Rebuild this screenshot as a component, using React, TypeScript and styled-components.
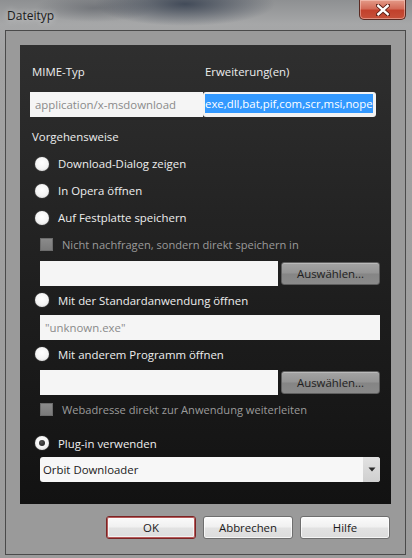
import React from "react";
import styled, { createGlobalStyle } from "styled-components";

const GlobalStyle = createGlobalStyle`
  html, body {
    margin: 0;
    padding: 0;
    background: #9c9c9c;
  }
  * {
    box-sizing: border-box;
  }
  body {
    font-family: "Open Sans", "Noto Sans", sans-serif;
    font-size: 11.4px;
  }
`;

const Window = styled.div`
  width: 412px;
  height: 558px;
  display: flex;
  flex-direction: column;
  background:
    radial-gradient(ellipse 90px 22px at 185px 4px, rgba(52, 62, 78, 0.85), rgba(52, 62, 78, 0) 100%),
    radial-gradient(ellipse 60px 14px at 95px 8px, rgba(80, 84, 92, 0.5), rgba(80, 84, 92, 0) 100%),
    linear-gradient(180deg, #8e9092 0px, #a6a7a8 24px, #a2a2a2 60px, #9b9b9b 100%);
  overflow: hidden;
`;

const TitleBar = styled.div`
  height: 30px;
  display: flex;
  align-items: flex-start;
  justify-content: space-between;
  padding-left: 7px;
  padding-right: 6px;
`;

const Title = styled.span`
  margin-top: 7px;
  font-size: 12px;
  color: #1b1b1b;
  text-shadow: 0 0 6px rgba(255, 255, 255, 0.7);
`;

const CloseButton = styled.div`
  width: 47px;
  height: 20px;
  border: 1px solid #5a2a22;
  border-top: none;
  border-radius: 0 0 5px 5px;
  background: linear-gradient(180deg, #e49a88 0%, #d36b58 45%, #c2412c 55%, #c65039 100%);
  box-shadow: inset 0 0 0 1px rgba(255, 220, 210, 0.45);
  display: flex;
  align-items: center;
  justify-content: center;
`;

const Client = styled.div`
  flex: 1;
  margin: 0 6px 3px 5px;
  border: 1px solid #4a4a4a;
  background: #9a9a9a;
  padding: 14px 14px 0 14px;
  display: flex;
  flex-direction: column;
`;

const Panel = styled.div`
  height: 459px;
  background: linear-gradient(180deg, #2f2f2f 0%, #1e1e1e 55%, #121212 100%);
  padding: 17px 11px 0 10px;
  display: flex;
  flex-direction: column;
  color: #ececec;
`;

const HeaderGrid = styled.div`
  display: grid;
  grid-template-columns: 173px 173px;
  grid-template-rows: 20px 25px;
  row-gap: 10px;
`;

const Label = styled.div<{ $indent?: number }>`
  height: 20px;
  line-height: 20px;
  padding-left: ${(p) => p.$indent ?? 2}px;
  color: #ededed;
  white-space: nowrap;
`;

const TextBox = styled.div<{ $width?: number; $muted?: boolean }>`
  height: 25px;
  width: ${(p) => (p.$width ? `${p.$width}px` : "auto")};
  background: #f5f5f5;
  color: ${(p) => (p.$muted ? "#8a8a8a" : "#222")};
  line-height: 25px;
  padding-left: 5px;
  white-space: nowrap;
  overflow: hidden;
`;

const SelectedBox = styled.div`
  height: 25px;
  width: 173px;
  background: #f3f3f3;
  border-radius: 3px;
  padding: 2px 3px 0 2px;
`;

const Selection = styled.span`
  display: inline-block;
  height: 19px;
  line-height: 19px;
  background: #3399ff;
  color: #fff;
  white-space: nowrap;
`;

const Section = styled.div`
  margin-top: 10px;
`;

const Row = styled.div<{ $height: number; $indent: number; $gap?: number }>`
  height: ${(p) => p.$height}px;
  display: flex;
  align-items: center;
  padding-left: ${(p) => p.$indent}px;
  margin-top: ${(p) => p.$gap ?? 0}px;
  gap: 8px;
`;

const Radio = styled.span<{ $checked?: boolean }>`
  width: 14px;
  height: 14px;
  border-radius: 50%;
  background: radial-gradient(circle at 50% 40%, #ffffff 0%, #f4f4f4 55%, #cfcfcf 100%);
  box-shadow: 0 0 1px rgba(255, 255, 255, 0.6);
  display: flex;
  align-items: center;
  justify-content: center;
  flex-shrink: 0;

  &::after {
    content: "";
    display: ${(p) => (p.$checked ? "block" : "none")};
    width: 6px;
    height: 6px;
    border-radius: 50%;
    background: radial-gradient(circle at 40% 35%, #555, #1a1a1a);
  }
`;

const Check = styled.span`
  width: 13px;
  height: 13px;
  background: linear-gradient(180deg, #8a8a8a, #7a7a7a);
  border: 1px solid #6c6c6c;
  flex-shrink: 0;
`;

const OptionText = styled.span<{ $disabled?: boolean }>`
  color: ${(p) => (p.$disabled ? "#9b9b9b" : "#eeeeee")};
  font-size: ${(p) => (p.$disabled ? "11.1px" : "11.4px")};
  white-space: nowrap;
  padding-left: 1px;
`;

const FieldRow = styled.div<{ $gap?: number }>`
  display: flex;
  align-items: center;
  gap: 3px;
  padding-left: 10px;
  margin-top: ${(p) => p.$gap ?? 0}px;
  height: 25px;
`;

const FieldFull = styled(TextBox)`
  flex: 1;
`;

const BrowseButton = styled.div`
  width: 99px;
  height: 23px;
  border-radius: 3px;
  background: linear-gradient(180deg, #a4a4a4 0%, #949494 48%, #858585 52%, #8a8a8a 100%);
  box-shadow: inset 0 1px 0 rgba(255, 255, 255, 0.25);
  border: 1px solid #5e5e5e;
  color: #1e1e1e;
  display: flex;
  align-items: center;
  justify-content: center;
`;

const Select = styled.div`
  height: 25px;
  margin-left: 10px;
  background: #f7f7f7;
  border-radius: 3px;
  display: flex;
  align-items: center;
  color: #1a1a1a;
  overflow: hidden;
`;

const SelectValue = styled.span`
  flex: 1;
  padding-left: 3px;
`;

const SelectArrow = styled.span`
  width: 17px;
  height: 100%;
  background: linear-gradient(180deg, #e2e2e2, #cfcfcf);
  display: flex;
  align-items: center;
  justify-content: center;
`;

const ButtonBar = styled.div`
  display: flex;
  justify-content: flex-end;
  gap: 7px;
  margin-top: 12px;
  padding-right: 1px;
`;

const DialogButton = styled.div<{ $default?: boolean }>`
  width: 90px;
  height: 23px;
  border-radius: 3px;
  border: 1px solid ${(p) => (p.$default ? "#7a2424" : "#6e6e6e")};
  box-shadow: ${(p) =>
    p.$default
      ? "inset 0 0 0 1px #b65a5a, inset 0 0 0 2px rgba(255,255,255,0.6)"
      : "inset 0 0 0 1px rgba(255,255,255,0.7)"};
  background: linear-gradient(180deg, #fbfbfb 0%, #f0f0f0 48%, #e2e2e2 52%, #dcdcdc 100%);
  color: #1a1a1a;
  display: flex;
  align-items: center;
  justify-content: center;
`;

const CloseIcon = () => (
  <svg width="14" height="12" viewBox="0 0 14 12">
    <path
      d="M2 1.5 L12 10.5 M12 1.5 L2 10.5"
      stroke="#5a1d14"
      strokeWidth="4.2"
      strokeLinecap="square"
    />
    <path
      d="M2.3 1.8 L11.7 10.2 M11.7 1.8 L2.3 10.2"
      stroke="#ffffff"
      strokeWidth="2.4"
      strokeLinecap="square"
    />
  </svg>
);

const ArrowIcon = () => (
  <svg width="8" height="5" viewBox="0 0 8 5">
    <path d="M0.5 0.5 L7.5 0.5 L4 4.5 Z" fill="#2a2a2a" />
  </svg>
);

type OptionProps = {
  text: string;
  height: number;
  gap?: number;
  checked?: boolean;
};

const RadioOption = ({ text, height, gap, checked }: OptionProps) => (
  <Row $height={height} $indent={5} $gap={gap}>
    <Radio $checked={checked} />
    <OptionText>{text}</OptionText>
  </Row>
);

const CheckOption = ({ text, height, gap }: OptionProps) => (
  <Row $height={height} $indent={10} $gap={gap}>
    <Check />
    <OptionText $disabled>{text}</OptionText>
  </Row>
);

const App = () => {
  return (
    <>
      <GlobalStyle />
      <Window>
        <TitleBar>
          <Title>Dateityp</Title>
          <CloseButton>
            <CloseIcon />
          </CloseButton>
        </TitleBar>
        <Client>
          <Panel>
            <HeaderGrid>
              <Label>MIME-Typ</Label>
              <Label>Erweiterung(en)</Label>
              <TextBox $muted>application/x-msdownload</TextBox>
              <SelectedBox>
                <Selection>exe,dll,bat,pif,com,scr,msi,nope</Selection>
              </SelectedBox>
            </HeaderGrid>

            <Section>
              <Label>Vorgehensweise</Label>
            </Section>

            <RadioOption text="Download-Dialog zeigen" height={27} gap={3} />
            <RadioOption text="In Opera öffnen" height={27} />
            <RadioOption text="Auf Festplatte speichern" height={27} />
            <CheckOption text="Nicht nachfragen, sondern direkt speichern in" height={27} />

            <FieldRow $gap={3}>
              <FieldFull />
              <BrowseButton>Auswählen...</BrowseButton>
            </FieldRow>

            <RadioOption text="Mit der Standardanwendung öffnen" height={28} />
            <FieldRow $gap={1}>
              <FieldFull $muted>"unknown.exe"</FieldFull>
            </FieldRow>

            <RadioOption text="Mit anderem Programm öffnen" height={28} />
            <FieldRow $gap={2}>
              <FieldFull />
              <BrowseButton>Auswählen...</BrowseButton>
            </FieldRow>

            <CheckOption text="Webadresse direkt zur Anwendung weiterleiten" height={28} />
            <RadioOption text="Plug-in verwenden" height={28} gap={6} checked />

            <Select>
              <SelectValue>Orbit Downloader</SelectValue>
              <SelectArrow>
                <ArrowIcon />
              </SelectArrow>
            </Select>
          </Panel>

          <ButtonBar>
            <DialogButton $default>OK</DialogButton>
            <DialogButton>Abbrechen</DialogButton>
            <DialogButton>Hilfe</DialogButton>
          </ButtonBar>
        </Client>
      </Window>
    </>
  );
};

export default App;
